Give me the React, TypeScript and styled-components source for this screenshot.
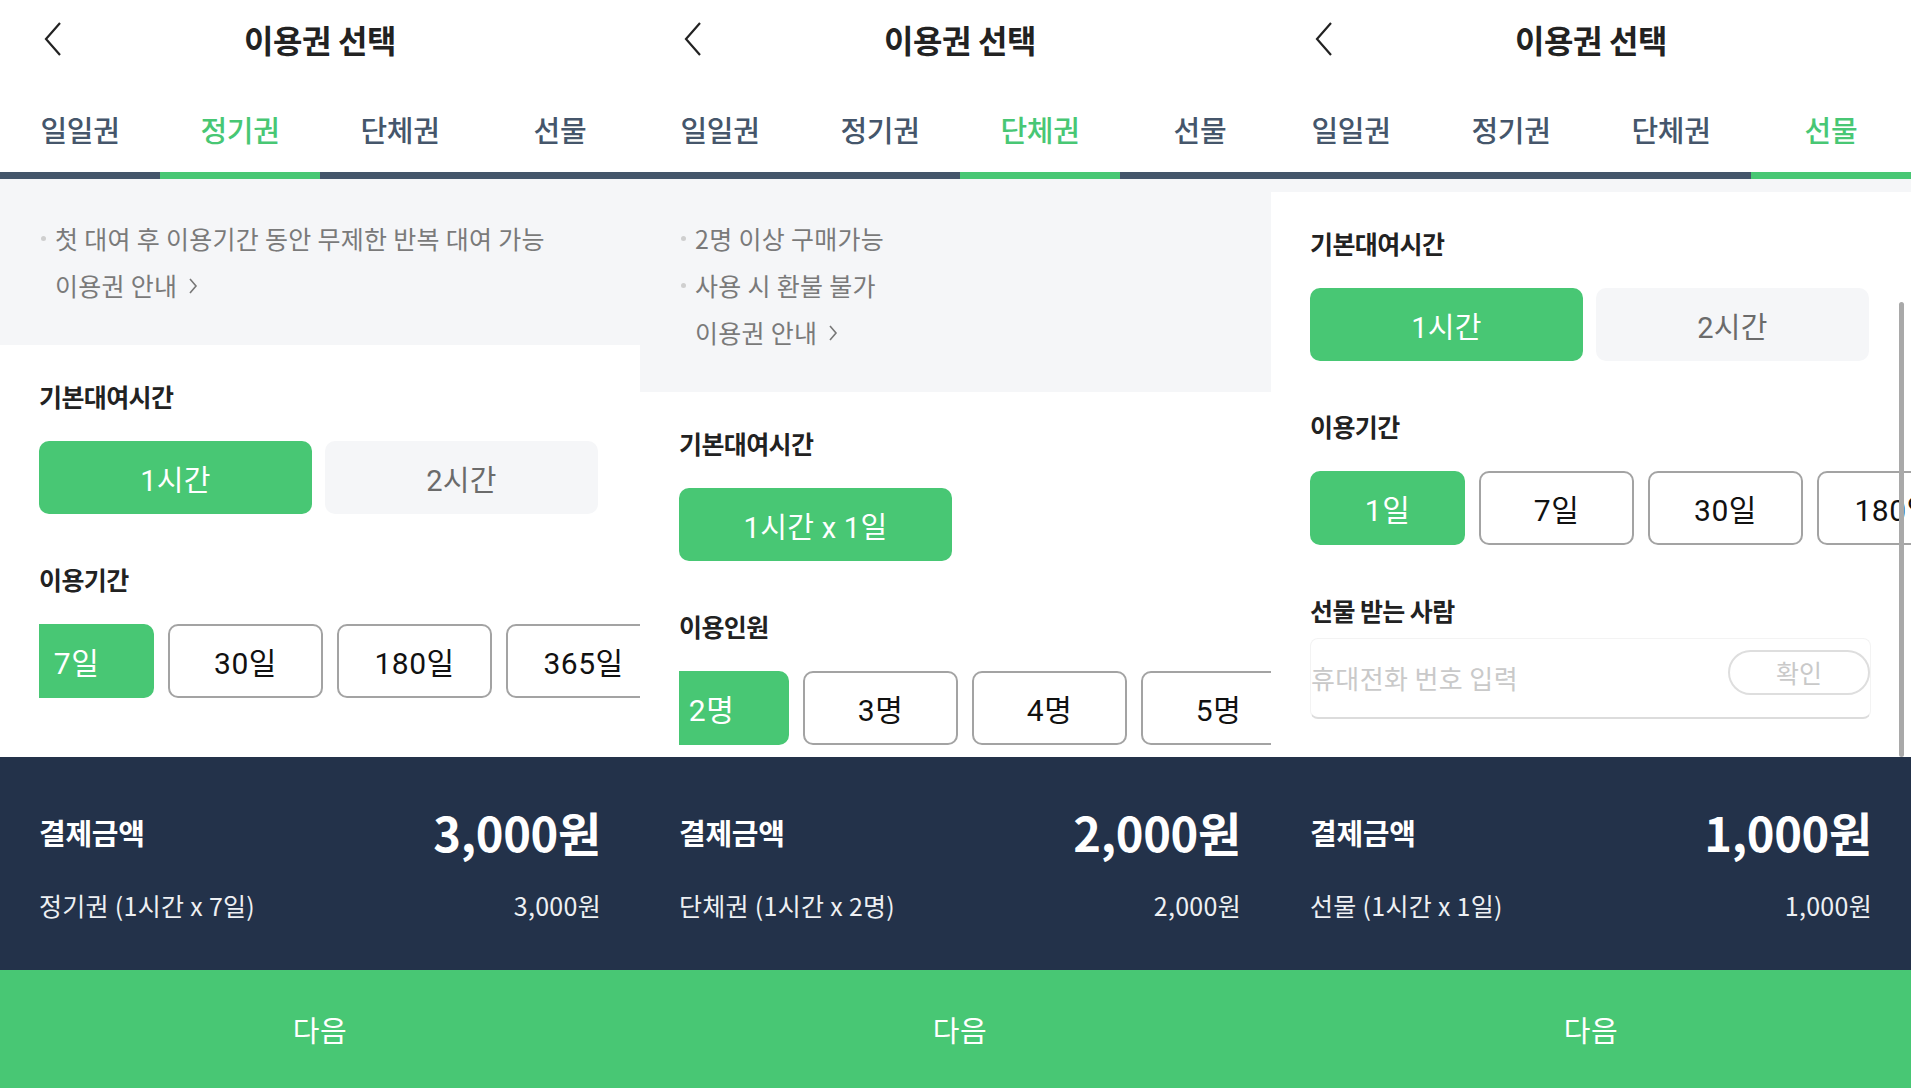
import React from 'react';
import styled, { createGlobalStyle } from 'styled-components';

const GREEN = '#48c774';
const NAVY = '#23324a';
const SLATE = '#44566a';
const SANS = `'Noto Sans CJK KR', 'Noto Sans', sans-serif`;
const DIGITS = `Roboto, 'Noto Sans CJK KR', sans-serif`;

const GlobalStyle = createGlobalStyle`
  html, body {
    margin: 0;
    padding: 0;
    background: #fff;
  }
  body {
    font-family: ${SANS};
  }
  * {
    box-sizing: border-box;
  }
`;

const Page = styled.div`
  display: flex;
  width: 1911px;
  height: 1088px;
  overflow: hidden;
`;

const Clip = styled.div<{ $width: number }>`
  flex: 0 0 ${(p) => p.$width}px;
  height: 100%;
  overflow: hidden;
`;

const Screen = styled.div`
  width: 640px;
  height: 1088px;
  display: flex;
  flex-direction: column;
  background: #fff;
`;

const Header = styled.header`
  height: 78px;
  display: grid;
  grid-template-columns: 90px 1fr 90px;
  align-items: center;
`;

const BackButton = styled.div`
  padding-left: 43px;
  display: flex;
  align-items: center;
`;

const Title = styled.h1`
  margin: 0;
  text-align: center;
  font-size: 32px;
  font-weight: 700;
  letter-spacing: -0.4px;
  color: #222;
`;

const TabBar = styled.nav`
  display: grid;
  grid-template-columns: repeat(4, 1fr);
`;

const Tab = styled.div<{ $active: boolean }>`
  height: 101px;
  padding-bottom: 25px;
  display: flex;
  align-items: flex-end;
  justify-content: center;
  border-bottom: 7px solid ${(p) => (p.$active ? GREEN : SLATE)};
  color: ${(p) => (p.$active ? GREEN : '#45566b')};
  font-size: 29px;
  font-weight: 500;
  line-height: 36px;
  letter-spacing: -0.3px;
`;

const Body = styled.div`
  flex: 1;
  position: relative;
  overflow: hidden;
`;

const Info = styled.div<{ $collapsed?: boolean }>`
  background: #f5f6f8;
  padding: ${(p) => (p.$collapsed ? '0' : '36px 39px 36px 41px')};
  height: ${(p) => (p.$collapsed ? '13px' : 'auto')};
  font-size: 25px;
  line-height: 47px;
  color: #7a7a7a;
  letter-spacing: 0.3px;
`;

const Note = styled.div`
  display: flex;
  align-items: center;
  gap: 9px;
`;

const Dot = styled.span`
  width: 5px;
  height: 5px;
  border-radius: 50%;
  background: #cfcfcf;
`;

const GuideLink = styled.div`
  display: flex;
  align-items: center;
  gap: 11px;
  padding-left: 14px;
`;

const Sections = styled.div`
  padding-top: 36px;
  display: flex;
  flex-direction: column;
  gap: 50px;
`;

const Section = styled.section`
  padding-left: 39px;
`;

const SectionTitle = styled.h2<{ $gap?: number }>`
  margin: 0 0 ${(p) => p.$gap ?? 30}px;
  font-size: 25px;
  line-height: 30px;
  font-weight: 700;
  letter-spacing: -0.6px;
  color: #222;
`;

const ChoiceRow = styled.div`
  display: flex;
  gap: 13px;
`;

const Choice = styled.div<{ $active: boolean }>`
  width: 273px;
  height: 73px;
  border-radius: 10px;
  display: flex;
  align-items: center;
  justify-content: center;
  background: ${(p) => (p.$active ? GREEN : '#f5f6f8')};
  color: ${(p) => (p.$active ? '#fff' : '#6b6b6b')};
  font-family: ${DIGITS};
  font-size: 29px;
  letter-spacing: 0.3px;
`;

const Scroller = styled.div`
  overflow: hidden;
`;

const Track = styled.div<{ $offset: number }>`
  display: flex;
  gap: 14px;
  transform: translateX(-${(p) => p.$offset}px);
`;

const Option = styled.div<{ $active: boolean }>`
  flex: 0 0 155px;
  height: 74px;
  border-radius: 10px;
  display: flex;
  align-items: center;
  justify-content: center;
  border: 2px solid ${(p) => (p.$active ? GREEN : '#a3a3a3')};
  background: ${(p) => (p.$active ? GREEN : '#fff')};
  color: ${(p) => (p.$active ? '#fff' : '#111')};
  font-family: ${DIGITS};
  font-size: 30px;
  letter-spacing: 0.5px;
`;

const InputBox = styled.div`
  margin-right: 40px;
  height: 81px;
  display: flex;
  align-items: center;
  justify-content: space-between;
  border: 1px solid #f3f3f3;
  border-bottom: 2px solid #dcdcdc;
  border-radius: 8px;
`;

const Placeholder = styled.span`
  margin-bottom: 2px;
  font-size: 26px;
  color: #c9c9c9;
  letter-spacing: 0.4px;
`;

const ConfirmPill = styled.div`
  width: 142px;
  height: 45px;
  margin-bottom: 12px;
  border: 2px solid #dedede;
  border-radius: 23px;
  display: flex;
  align-items: center;
  justify-content: center;
  font-size: 25px;
  color: #c9c9c9;
`;

const ScrollThumb = styled.div`
  position: absolute;
  right: 7px;
  top: 123px;
  bottom: 0;
  width: 5px;
  border-radius: 3px;
  background: #a9a9a9;
  z-index: 2;
`;

const Summary = styled.footer`
  background: ${NAVY};
  color: #fff;
  padding: 47px 39px 48px;
`;

const SummaryRow = styled.div`
  display: flex;
  align-items: center;
  justify-content: space-between;
`;

const TotalLabel = styled.span`
  font-size: 29px;
  line-height: 56px;
  font-weight: 700;
  letter-spacing: -0.3px;
`;

const TotalPrice = styled.span`
  font-size: 47px;
  line-height: 56px;
  font-weight: 700;
  letter-spacing: -0.3px;
`;

const DetailRow = styled(SummaryRow)`
  margin-top: 28px;
  font-size: 25px;
  line-height: 34px;
  color: #eef0f3;
  letter-spacing: 0.3px;
`;

const NextButton = styled.div`
  height: 118px;
  background: ${GREEN};
  color: #fff;
  display: flex;
  align-items: center;
  justify-content: center;
  font-size: 29px;
  letter-spacing: 0.5px;
`;

const TABS = ['일일권', '정기권', '단체권', '선물'];

type PanelData = {
  tab: number;
  notes?: string[];
  rental: string[];
  listTitle: string;
  options: string[];
  offset: number;
  gift?: boolean;
  detail: string;
  price: string;
};

const BackIcon = () => (
  <svg width="20" height="36" viewBox="0 0 20 36">
    <polyline points="17,2 3,18 17,34" fill="none" stroke="#222" strokeWidth="2.2" />
  </svg>
);

const SmallChevron = () => (
  <svg width="10" height="18" viewBox="0 0 10 18">
    <polyline points="2,2 8,9 2,16" fill="none" stroke="#777" strokeWidth="1.6" />
  </svg>
);

const Panel = ({ data }: { data: PanelData }) => (
  <Screen>
    <Header>
      <BackButton>
        <BackIcon />
      </BackButton>
      <Title>이용권 선택</Title>
      <div />
    </Header>
    <TabBar>
      {TABS.map((t, i) => (
        <Tab key={t} $active={i === data.tab}>
          {t}
        </Tab>
      ))}
    </TabBar>
    <Body>
      {data.notes ? (
        <Info>
          {data.notes.map((n) => (
            <Note key={n}>
              <Dot />
              {n}
            </Note>
          ))}
          <GuideLink>
            이용권 안내
            <SmallChevron />
          </GuideLink>
        </Info>
      ) : (
        <Info $collapsed />
      )}
      <Sections>
        <Section>
          <SectionTitle>기본대여시간</SectionTitle>
          <ChoiceRow>
            {data.rental.map((r, i) => (
              <Choice key={r} $active={i === 0}>
                {r}
              </Choice>
            ))}
          </ChoiceRow>
        </Section>
        <Section>
          <SectionTitle>{data.listTitle}</SectionTitle>
          <Scroller>
            <Track $offset={data.offset}>
              {data.options.map((o, i) => (
                <Option key={o} $active={i === 0}>
                  {o}
                </Option>
              ))}
            </Track>
          </Scroller>
        </Section>
        {data.gift && (
          <Section>
            <SectionTitle $gap={13}>선물 받는 사람</SectionTitle>
            <InputBox>
              <Placeholder>휴대전화 번호 입력</Placeholder>
              <ConfirmPill>확인</ConfirmPill>
            </InputBox>
          </Section>
        )}
      </Sections>
      {data.gift && <ScrollThumb />}
    </Body>
    <Summary>
      <SummaryRow>
        <TotalLabel>결제금액</TotalLabel>
        <TotalPrice>{data.price}</TotalPrice>
      </SummaryRow>
      <DetailRow>
        <span>{data.detail}</span>
        <span>{data.price}</span>
      </DetailRow>
    </Summary>
    <NextButton>다음</NextButton>
  </Screen>
);

const PANELS: PanelData[] = [
  {
    tab: 1,
    notes: ['첫 대여 후 이용기간 동안 무제한 반복 대여 가능'],
    rental: ['1시간', '2시간'],
    listTitle: '이용기간',
    options: ['7일', '30일', '180일', '365일'],
    offset: 40,
    detail: '정기권 (1시간 x 7일)',
    price: '3,000원',
  },
  {
    tab: 2,
    notes: ['2명 이상 구매가능', '사용 시 환불 불가'],
    rental: ['1시간 x 1일'],
    listTitle: '이용인원',
    options: ['2명', '3명', '4명', '5명'],
    offset: 45,
    detail: '단체권 (1시간 x 2명)',
    price: '2,000원',
  },
  {
    tab: 3,
    rental: ['1시간', '2시간'],
    listTitle: '이용기간',
    options: ['1일', '7일', '30일', '180일'],
    offset: 0,
    gift: true,
    detail: '선물 (1시간 x 1일)',
    price: '1,000원',
  },
];

export default function App() {
  return (
    <>
      <GlobalStyle />
      <Page>
        <Clip $width={640}>
          <Panel data={PANELS[0]} />
        </Clip>
        <Clip $width={631}>
          <Panel data={PANELS[1]} />
        </Clip>
        <Clip $width={640}>
          <Panel data={PANELS[2]} />
        </Clip>
      </Page>
    </>
  );
}
